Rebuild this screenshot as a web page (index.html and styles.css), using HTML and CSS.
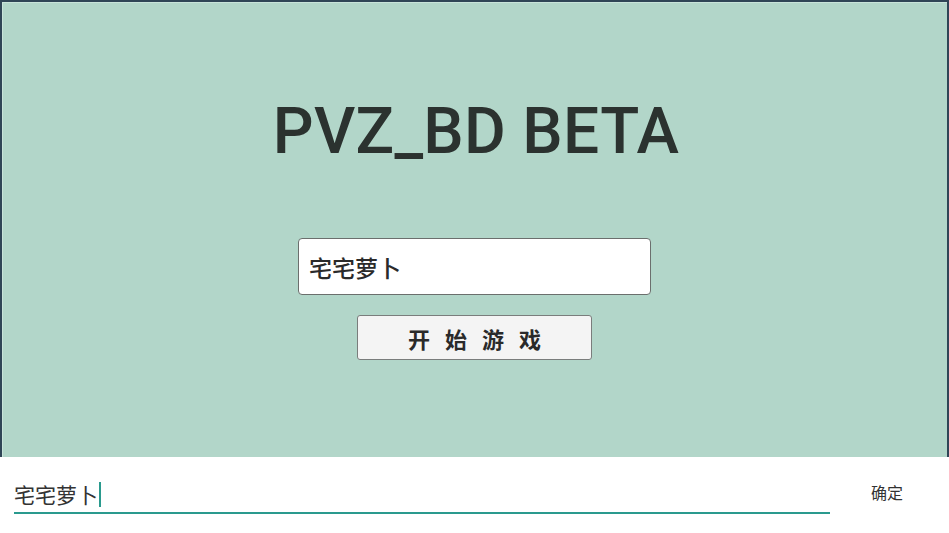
FILE: index.html
```html
<!DOCTYPE html>
<html lang="zh">
<head>
<meta charset="utf-8">
<title>PVZ_BD BETA</title>
<link rel="stylesheet" href="styles.css">
</head>
<body>
<div class="frame">
  <h1 class="title">PVZ_BD BETA</h1>
  <div class="name-box">宅宅萝卜</div>
  <button class="start">开 始 游 戏</button>
</div>
<div class="ime-bar">
  <div class="ime-field"><span class="ime-text">宅宅萝卜</span><span class="caret"></span></div>
  <div class="ime-ok">确定</div>
</div>
</body>
</html>
```

FILE: styles.css
```css
html, body {
  margin: 0;
  padding: 0;
  background: #ffffff;
  font-family: "Noto Sans CJK SC", "Noto Sans", sans-serif;
}
.frame {
  box-sizing: border-box;
  height: 457px;
  background: #b2d6c9;
  border: 2px solid #2f4556;
  border-bottom: none;
  box-shadow: inset 1px 1px 0 #c9e4da;
  display: flex;
  flex-direction: column;
  align-items: center;
  padding-top: 98px;
}
.title {
  margin: 0;
  font-family: Roboto, "Liberation Sans", sans-serif;
  font-size: 64px;
  line-height: 1;
  height: 64px;
  font-weight: 500;
  color: #2b322f;
  padding-left: 3px;
  letter-spacing: 0.3px;
}
.name-box {
  box-sizing: border-box;
  margin-top: 74px;
  width: 353px;
  height: 57px;
  background: #ffffff;
  border: 1px solid #6b6f6d;
  border-radius: 4px;
  padding-left: 10px;
  font-size: 23px;
  font-weight: 500;
  color: #2a2a2a;
  display: flex;
  align-items: center;
}
.start {
  box-sizing: border-box;
  margin-top: 20px;
  width: 235px;
  height: 45px;
  background: #f4f4f4;
  border: 1px solid #7a7d7c;
  border-radius: 3px;
  font-family: "Noto Sans CJK SC", sans-serif;
  font-size: 22px;
  font-weight: 700;
  color: #2a2a2a;
  letter-spacing: 5px;
  padding: 0 0 0 5px;
}
.ime-bar {
  height: 76px;
  display: flex;
  align-items: flex-start;
  padding: 20px 0 0 14px;
  box-sizing: border-box;
}
.ime-field {
  width: 816px;
  height: 35px;
  border-bottom: 2px solid #2a9a8e;
  display: flex;
  align-items: center;
  font-size: 21px;
  color: #333333;
}
.ime-text {
  line-height: 1;
}
.caret {
  width: 2px;
  height: 25px;
  margin-left: 1px;
  background: #2a9a8e;
}
.ime-ok {
  margin-left: 41px;
  margin-top: 5px;
  font-size: 16px;
  line-height: 20px;
  color: #333333;
}
```
